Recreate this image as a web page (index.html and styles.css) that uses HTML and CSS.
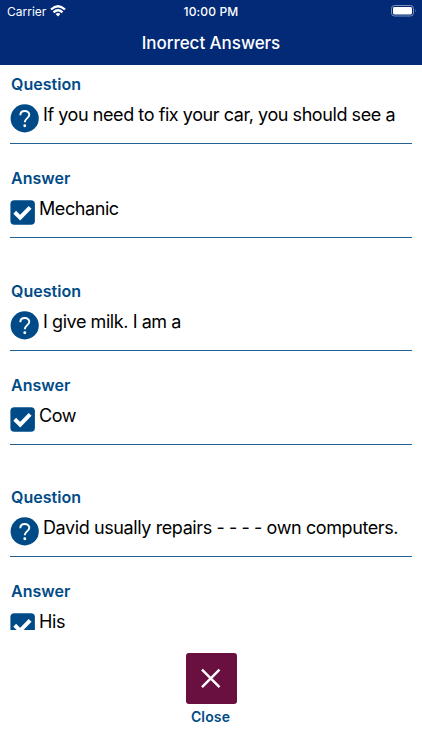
FILE: index.html
```html
<!DOCTYPE html>
<html lang="en">
<head>
<meta charset="utf-8">
<title>Inorrect Answers</title>
<link rel="stylesheet" href="styles.css">
</head>
<body>
<svg class="defs" aria-hidden="true">
  <symbol id="question" viewBox="0 0 29 29">
    <circle cx="14.7" cy="14.4" r="14.1" fill="#004b87"/>
    <path d="M10.3 11.2C10.3 5.6 19.3 5.6 19.3 10.8C19.3 14 14.8 14.4 14.8 18.3" fill="none" stroke="#fff" stroke-width="1.9"/>
    <circle cx="14.8" cy="21.7" r="1.45" fill="#fff"/>
  </symbol>
  <symbol id="check" viewBox="0 0 25 25">
    <rect x=".4" y=".2" width="24.5" height="24.6" rx="4" fill="#004b87"/>
    <path d="M4.7 12.3L10.2 17.6L20.1 7.4" fill="none" stroke="#fff" stroke-width="4"/>
  </symbol>
</svg>
<header class="header">
  <div class="status">
    <div class="carrier"><span>Carrier</span>
      <svg class="wifi" viewBox="0 0 16 12"><g fill="none" stroke="#fff" stroke-width="2.3"><path d="M1 4.5Q8-2 15 4.5"/><path d="M3.5 7.4Q8 3.2 12.5 7.4"/></g><path d="M5.6 9Q8 7 10.4 9L8 11.5Z" fill="#fff"/></svg>
    </div>
    <span class="time">10:00 PM</span>
    <svg class="battery" viewBox="0 0 26 12"><rect x=".5" y=".5" width="22" height="10.5" rx="3" fill="none" stroke="#7c90bd"/><rect x="2" y="2" width="19" height="7.5" rx="1.4" fill="#fff"/><path d="M24 4Q25.3 5.7 24 7.5Z" fill="#7c90bd"/></svg>
  </div>
  <h1 class="title">Inorrect Answers</h1>
</header>
<main class="list">
  <section class="entry">
    <div class="field"><h2 class="label">Question</h2><div class="row"><svg class="q-icon"><use href="#question"/></svg><p class="text">If you need to fix your car, you should see a</p></div></div>
    <div class="field"><h2 class="label">Answer</h2><div class="row"><svg class="a-icon"><use href="#check"/></svg><p class="text">Mechanic</p></div></div>
  </section>
  <section class="entry">
    <div class="field"><h2 class="label">Question</h2><div class="row"><svg class="q-icon"><use href="#question"/></svg><p class="text">I give milk. I am a</p></div></div>
    <div class="field"><h2 class="label">Answer</h2><div class="row"><svg class="a-icon"><use href="#check"/></svg><p class="text">Cow</p></div></div>
  </section>
  <section class="entry">
    <div class="field"><h2 class="label">Question</h2><div class="row"><svg class="q-icon"><use href="#question"/></svg><p class="text text-dashes">David usually repairs - - - - own computers.</p></div></div>
    <div class="field"><h2 class="label">Answer</h2><div class="row"><svg class="a-icon"><use href="#check"/></svg><p class="text">His</p></div></div>
  </section>
</main>
<footer class="footer">
  <button class="close" aria-label="Close"><svg viewBox="0 0 51 51"><path d="M16 16.7L33.5 34.2M33.5 16.7L16 34.2" stroke="#fff" stroke-width="2.4"/></svg></button>
  <span class="close-label">Close</span>
</footer>
</body>
</html>
```
FILE: styles.css
```css
* { box-sizing: border-box; margin: 0; padding: 0; }
body { width: 422px; height: 750px; overflow: hidden; background: #fff; color: #000; font-family: Inter, "Liberation Sans", sans-serif; }
svg { display: block; flex: none; }
.defs { display: none; }
.header { height: 65px; background: #032a76; color: #fff; }
.status { display: grid; grid-template-columns: 1fr auto 1fr; align-items: center; height: 22px; padding: 0 5px 0 7px; font-size: 12px; }
.carrier { display: flex; align-items: center; gap: 4px; }
.wifi { width: 16px; height: 12px; margin-top: -1px; }
.time { margin-right: 2px; font-weight: 500; font-size: 12px; letter-spacing: .15px; }
.battery { width: 26px; height: 12px; justify-self: end; margin-top: -1px; }
.title { font-size: 17px; line-height: 42px; font-weight: 500; letter-spacing: -.05px; text-align: center; }
.list { height: 565px; overflow: hidden; padding: 9px 10.5px 0 10px; }
.entry { height: 206.5px; }
.field { height: 70px; margin-bottom: 24px; border-bottom: 1px solid #236192; }
.label { height: 30px; padding-left: 1px; font-size: 16px; line-height: 21px; font-weight: 600; letter-spacing: .05px; color: #004b87; }
.row { display: flex; }
.q-icon { width: 29px; height: 29px; margin-right: 4px; }
.a-icon { width: 25px; height: 25px; margin: 2px 4px 0 0; }
.text { height: 29px; font-size: 18px; line-height: 22px; letter-spacing: -.43px; white-space: nowrap; }
.a-icon + .text { letter-spacing: -.42px; }
.q-icon + .text-dashes { letter-spacing: -.4px; }
.footer { display: flex; flex-direction: column; align-items: center; padding-top: 23px; }
.close { width: 51px; height: 51px; border: 0; border-radius: 3px; background: #6a1040; }
.close-label { margin: 4px 1px 0 0; font-size: 14px; line-height: 18px; font-weight: 600; letter-spacing: .15px; color: #004b87; }
```
